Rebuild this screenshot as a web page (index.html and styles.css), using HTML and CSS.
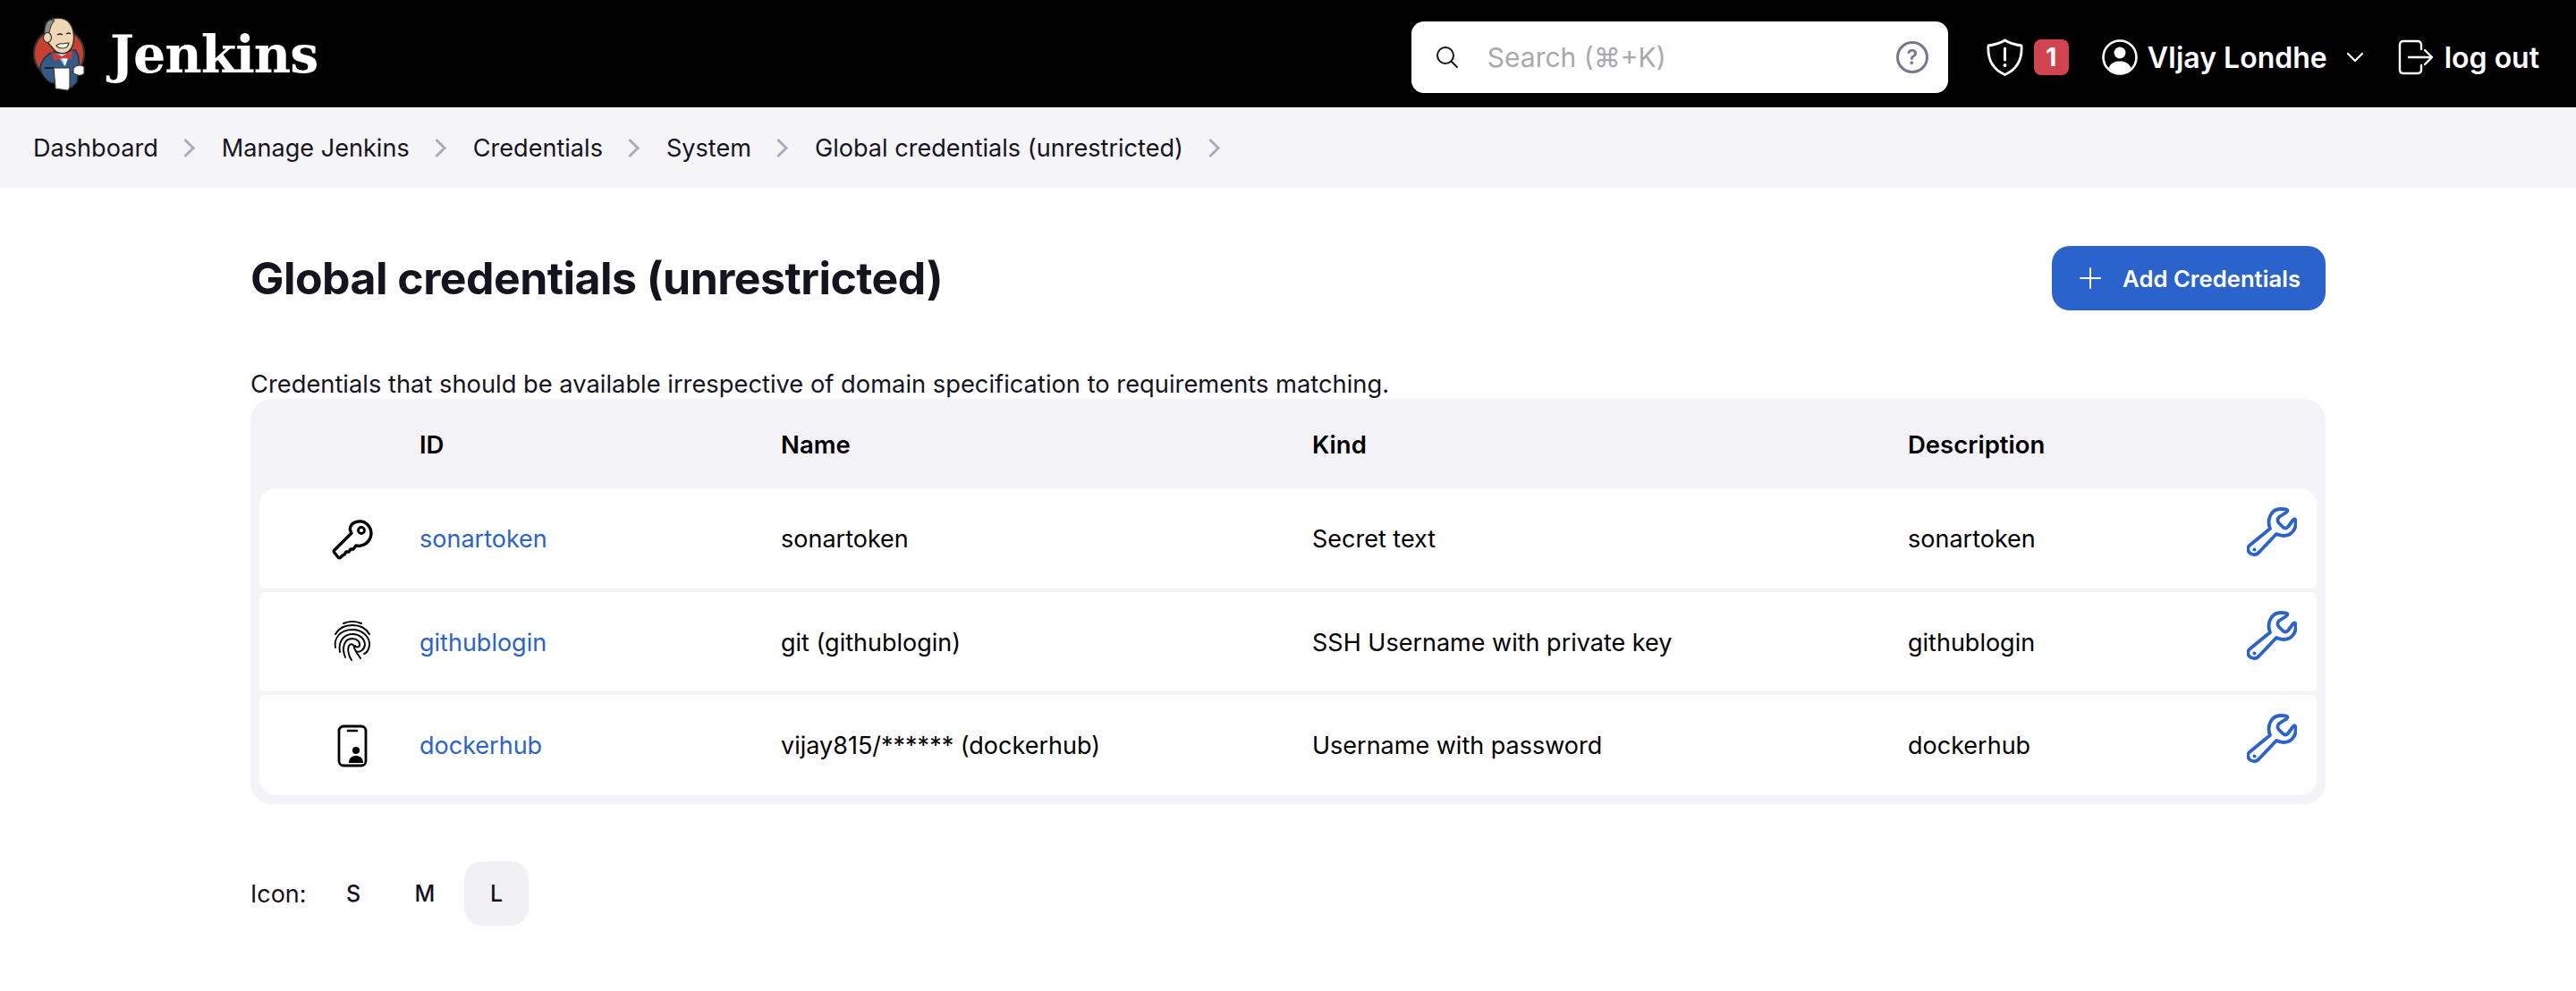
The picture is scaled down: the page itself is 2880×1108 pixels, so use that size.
FILE: index.html
```html
<!DOCTYPE html>
<html lang="en">
<head>
<meta charset="utf-8">
<title>Global credentials (unrestricted) [Jenkins]</title>
<link rel="stylesheet" href="styles.css">
</head>
<body>
<header class="page-header">
	<a class="brand" href="#">
		<svg class="brand-logo" viewBox="0 0 62 84" aria-hidden="true">
			<circle cx="30" cy="42" r="28" fill="#c8412f" stroke="#3a3534" stroke-width="2"/>
			<path d="M9 58 C10 48 18 42 24 40 L48 38 C52 42 53 50 52 60 L50 74 L44 80 L20 74 C14 70 10 64 9 58 Z" fill="#335b85" stroke="#23303f" stroke-width="1.5"/>
			<path d="M27 42 L36 56 L44 41 Z" fill="#8fb8d8"/>
			<path d="M31 42 L37 56 L41 42 Z" fill="#fff"/>
			<path d="M15 8 C20 1 36 0 42 8 C48 16 48 30 43 37 C38 44 28 43 23 36 C20 32 17 30 15 26 Z" fill="#f0d6b5" stroke="#2f2b2a" stroke-width="1.5"/>
			<path d="M21 4 C15 6 13 14 14 22 L18 25 C19 18 20 10 25 5 Z" fill="#8c8c8c" stroke="#2f2b2a" stroke-width="1"/>
			<ellipse cx="17" cy="24" rx="4.5" ry="5.5" fill="#f0d6b5" stroke="#2f2b2a" stroke-width="1.2"/>
			<path d="M28 21 q3 -2 6 0 M38 20 q3 -2 5 0" fill="none" stroke="#2f2b2a" stroke-width="1.3"/>
			<path d="M27 33 q4 -3 7 -2 q4 -1 7 -1 q-1 6 -7 6 q-5 0 -7 -3 Z" fill="#fff" stroke="#2f2b2a" stroke-width="1.2"/>
			<path d="M22 40 L33 45 L45 38 L44 48 L34 47 L24 50 Z" fill="#d33833"/>
			<path d="M14 58 H24" stroke="#111" stroke-width="1.5"/>
			<path d="M24 58 H42 V80 L40 83 L26 81 Z" fill="#fff" stroke="#3a3534" stroke-width="1.2"/>
			<path d="M46 58 C50 54 56 54 58 57 V64 C56 67 50 67 46 64 Z" fill="#fff" stroke="#3a3534" stroke-width="1.2"/>
		</svg>
		<span class="brand-name">Jenkins</span>
	</a>
	<div class="header-tools">
		<div class="search-box">
			<svg class="search-icon" viewBox="0 0 28 28" aria-hidden="true">
				<circle cx="12" cy="12" r="9" fill="none" stroke="#14141f" stroke-width="2"/>
				<path d="M18.5 18.5 L25 25" stroke="#14141f" stroke-width="2" stroke-linecap="round"/>
			</svg>
			<span class="search-placeholder">Search (⌘+K)</span>
			<span class="search-help">?</span>
		</div>
		<svg class="shield-icon" viewBox="0 0 41 42" aria-hidden="true">
			<path d="M20.5 2 C26 5.5 32 7 39 8 C40 22 35 34 20.5 40.5 C6 34 1 22 2 8 C9 7 15 5.5 20.5 2 Z" fill="none" stroke="#fff" stroke-width="2.8" stroke-linejoin="round"/>
			<path d="M20.5 11 V24" stroke="#fff" stroke-width="3" stroke-linecap="round"/>
			<circle cx="20.5" cy="30" r="2" fill="#fff"/>
		</svg>
		<span class="alert-count">1</span>
		<a class="user-link" href="#">
			<svg class="user-icon" viewBox="0 0 40 40" aria-hidden="true">
				<circle cx="20" cy="20" r="18.5" fill="none" stroke="#fff" stroke-width="2.6"/>
				<circle cx="20" cy="15" r="6.5" fill="#fff"/>
				<path d="M7.5 32 C10 26 15 24.5 20 24.5 C25 24.5 30 26 32.5 32 C29 36 24 38 20 38 C16 38 11 36 7.5 32 Z" fill="#fff"/>
			</svg>
			<span>VIjay Londhe</span>
			<svg class="user-caret" viewBox="0 0 20 12" aria-hidden="true">
				<path d="M2 2 L10 10 L18 2" fill="none" stroke="#fff" stroke-width="2.2" stroke-linecap="round" stroke-linejoin="round"/>
			</svg>
		</a>
		<a class="logout-link" href="#">
			<svg class="logout-icon" viewBox="0 0 40 40" aria-hidden="true">
				<path d="M26 11 V6 C26 3.5 24.5 2 22 2 H6 C3.5 2 2 3.5 2 6 V34 C2 36.5 3.5 38 6 38 H22 C24.5 38 26 36.5 26 34 V29" fill="none" stroke="#fff" stroke-width="2.4" stroke-linecap="round"/>
				<path d="M12 20 H38 M30 12 L38 20 L30 28" fill="none" stroke="#fff" stroke-width="2.4" stroke-linecap="round" stroke-linejoin="round"/>
			</svg>
			<span>log out</span>
		</a>
	</div>
</header>

<nav class="breadcrumbs">
	<a href="#">Dashboard</a><i class="crumb-sep"></i>
	<a href="#">Manage Jenkins</a><i class="crumb-sep"></i>
	<a href="#">Credentials</a><i class="crumb-sep"></i>
	<a href="#">System</a><i class="crumb-sep"></i>
	<a href="#">Global credentials (unrestricted)</a><i class="crumb-sep"></i>
</nav>

<main class="content">
	<div class="title-row">
		<h1>Global credentials (unrestricted)</h1>
		<a class="add-button" href="#">
			<svg class="add-icon" viewBox="0 0 24 24" aria-hidden="true">
				<path d="M12 1 V23 M1 12 H23" stroke="#fff" stroke-width="2" stroke-linecap="round"/>
			</svg>
			Add Credentials
		</a>
	</div>
	<p class="intro">Credentials that should be available irrespective of domain specification to requirements matching.</p>

	<div class="cred-panel">
		<table class="cred-table">
			<colgroup>
				<col class="col-icon"><col class="col-id"><col class="col-name"><col class="col-kind"><col class="col-desc"><col>
			</colgroup>
			<thead>
				<tr><th></th><th>ID</th><th>Name</th><th>Kind</th><th>Description</th><th></th></tr>
			</thead>
			<tbody>
				<tr>
					<td class="type-cell">
						<svg class="type-icon" viewBox="0 0 48 48" aria-hidden="true">
							<path d="M23 17 L4 36 C3 37 3 38 4 39 L8 44 C9 45 10 45 11 44 L13 42 L15 41 L17 38 L20 38 L22 35 L25 35 L28 31 C36 33 44 27 45 18 C45 10 39 3 31 4 C23 5 19 11 23 17 Z" fill="none" stroke="#000" stroke-width="3.4" stroke-linejoin="round"/>
							<circle cx="34" cy="14" r="3.5" fill="none" stroke="#000" stroke-width="2.8"/>
						</svg>
					</td>
					<td><a class="cred-link" href="#">sonartoken</a></td>
					<td>sonartoken</td>
					<td>Secret text</td>
					<td>sonartoken</td>
					<td class="action-cell"><svg class="wrench" viewBox="0 0 56 56" aria-hidden="true"><use href="#wrench-shape"/></svg></td>
				</tr>
				<tr>
					<td class="type-cell">
						<svg class="type-icon" viewBox="0 0 48 48" aria-hidden="true">
							<g fill="none" stroke="#000" stroke-width="1.9" stroke-linecap="round">
								<path d="M14 3 C20 0.5 28 0.5 34 3"/>
								<path d="M5 15 C9 8 16 5 24 5 C32 5 39 8 43 15"/>
								<path d="M5 30 C3 20 10 10 24 10 C36 10 44 19 43 28 C42 33 40 36 37 37"/>
								<path d="M10 35 C8 25 13 15 24 15 C33 15 38 21 38 27 C37 33 32 36 28 34"/>
								<path d="M16 41 C12 31 14 20 24 20 C29 20 33 24 32 28 C31 30 28 30 27 28"/>
								<path d="M23 44 C19 38 18 30 21 27 C23 25 26 27 26 30 C27 34 30 37 33 42"/>
							</g>
						</svg>
					</td>
					<td><a class="cred-link" href="#">githublogin</a></td>
					<td>git (githublogin)</td>
					<td>SSH Username with private key</td>
					<td>githublogin</td>
					<td class="action-cell"><svg class="wrench" viewBox="0 0 56 56" aria-hidden="true"><use href="#wrench-shape"/></svg></td>
				</tr>
				<tr>
					<td class="type-cell">
						<svg class="type-icon" viewBox="0 0 48 48" aria-hidden="true">
							<rect x="9" y="2" width="30" height="44" rx="5" fill="none" stroke="#000" stroke-width="2.8"/>
							<path d="M19 7 H29" stroke="#000" stroke-width="2.6" stroke-linecap="round"/>
							<circle cx="28" cy="29" r="4" fill="#000"/>
							<path d="M20 43 C20 37 24 35 28 35 C32 35 36 37 36 43 Z" fill="#000"/>
						</svg>
					</td>
					<td><a class="cred-link" href="#">dockerhub</a></td>
					<td>vijay815/****** (dockerhub)</td>
					<td>Username with password</td>
					<td>dockerhub</td>
					<td class="action-cell"><svg class="wrench" viewBox="0 0 56 56" aria-hidden="true"><use href="#wrench-shape"/></svg></td>
				</tr>
			</tbody>
		</table>
	</div>

	<div class="icon-sizes">
		<span class="icon-label">Icon:</span>
		<a class="size-option" href="#">S</a>
		<a class="size-option" href="#">M</a>
		<a class="size-option size-active" href="#">L</a>
	</div>
</main>

<svg class="svg-defs" aria-hidden="true">
	<symbol id="wrench-shape" viewBox="0 0 56 56">
		<path d="M26 24 C22 14 27 2 38 2 C41 2 44 2 45 3 C46 4 45 5 44 6 L36 11 C34 13 34 16 36 18 L40 22 C42 24 44 24 46 22 L52 14 C53 13 54 13 54.5 15 C56 24 50 32 41 32 C38 32 36 31 33 30 L14 50 C11 54 6 54 3 51 C0 48 1 44 4 42 Z" fill="none" stroke="#2b63cc" stroke-width="3.8" stroke-linejoin="round"/>
		<circle cx="8.5" cy="47.5" r="2" fill="#2b63cc"/>
	</symbol>
</svg>
</body>
</html>
```

FILE: styles.css
```css
* {
	box-sizing: border-box;
}
body {
	margin: 0;
	background: #fff;
	color: #14141f;
	font-family: Inter, "Liberation Sans", sans-serif;
	font-size: 27px;
}
a {
	color: inherit;
	text-decoration: none;
}

/* top bar */
.page-header {
	display: flex;
	align-items: center;
	justify-content: space-between;
	height: 120px;
	padding: 0 41px 0 36px;
	background: #000;
	color: #fff;
}
.brand {
	display: flex;
	align-items: center;
	gap: 25px;
}
.brand-logo {
	width: 62px;
	height: 84px;
}
.brand-name {
	font-family: "DejaVu Serif", "Liberation Serif", serif;
	font-size: 57px;
	font-weight: 700;
	letter-spacing: -1px;
}
.header-tools {
	display: flex;
	align-items: center;
	font-size: 30px;
	font-weight: 600;
}
.search-box {
	display: flex;
	align-items: center;
	width: 600px;
	height: 80px;
	margin-top: 8px;
	padding: 0 22px 0 26px;
	background: #fff;
	border-radius: 14px;
}
.search-icon {
	width: 28px;
	height: 28px;
}
.search-placeholder {
	flex: 1;
	margin-left: 31px;
	color: #a9a9ae;
	font-weight: 400;
}
.search-help {
	width: 36px;
	height: 36px;
	border: 3px solid #777790;
	border-radius: 50%;
	color: #777790;
	font-size: 23px;
	font-weight: 600;
	line-height: 30px;
	text-align: center;
}
.shield-icon {
	width: 41px;
	height: 42px;
	margin-left: 43px;
	margin-top: 8px;
}
.alert-count {
	width: 39px;
	height: 40px;
	margin-left: 12px;
	margin-top: 8px;
	background: #d0444f;
	border-radius: 8px;
	font-size: 28px;
	font-weight: 700;
	line-height: 40px;
	text-align: center;
}
.user-link {
	display: flex;
	align-items: center;
	margin-left: 37px;
	margin-top: 8px;
	font-size: 32px;
}
.user-icon {
	width: 40px;
	height: 40px;
	margin-right: 11px;
}
.user-caret {
	width: 20px;
	height: 12px;
	margin-left: 21px;
}
.logout-link {
	display: flex;
	align-items: center;
	gap: 12px;
	margin-left: 38px;
	margin-top: 8px;
	font-size: 32px;
}
.logout-icon {
	width: 40px;
	height: 40px;
}

/* breadcrumb */
.breadcrumbs {
	display: flex;
	align-items: center;
	height: 90px;
	padding-left: 37px;
	background: #f5f5f8;
	font-size: 27.1px;
}
.crumb-sep {
	width: 15px;
	height: 15px;
	margin: 0 33px 0 23px;
	border-top: 3px solid #ababbd;
	border-right: 3px solid #ababbd;
	transform: rotate(45deg);
}

/* page body */
.content {
	padding: 65px 280px 0;
}
.title-row {
	display: flex;
	align-items: center;
	justify-content: space-between;
}
h1 {
	margin: 0;
	font-size: 50px;
	font-weight: 700;
	letter-spacing: -0.55px;
}
.add-button {
	display: flex;
	align-items: center;
	gap: 24px;
	height: 72px;
	padding: 0 28px 0 31px;
	background: #2b63cc;
	border-radius: 20px;
	color: #fff;
	font-size: 25.7px;
	font-weight: 600;
}
.add-icon {
	width: 24px;
	height: 24px;
}
.intro {
	margin: 66px 0 0;
	font-size: 27.3px;
	line-height: 33px;
}

/* credentials table */
.cred-panel {
	padding: 0 10px 6px;
	background: #f3f3f8;
	border-radius: 24px;
}
.cred-table {
	width: 100%;
	table-layout: fixed;
	border-collapse: separate;
	border-spacing: 0 4px;
}
.col-icon {
	width: 163px;
}
.col-id {
	width: 404px;
}
.col-name {
	width: 594px;
}
.col-kind {
	width: 666px;
}
.col-desc {
	width: 380px;
}
.cred-table th {
	height: 92px;
	padding: 2px 16px 0;
	color: #000;
	font-size: 27.5px;
	font-weight: 600;
	text-align: left;
}
.cred-table td {
	height: 111.5px;
	padding: 2px 16px 0;
	background: #fff;
	color: #000;
	font-weight: 410;
}
.cred-table td:first-child {
	border-radius: 6px 0 0 6px;
}
.cred-table td:last-child {
	border-radius: 0 6px 6px 0;
}
.cred-table tbody tr:first-child td:first-child {
	border-top-left-radius: 18px;
}
.cred-table tbody tr:first-child td:last-child {
	border-top-right-radius: 18px;
}
.cred-table tbody tr:last-child td:first-child {
	border-bottom-left-radius: 18px;
}
.cred-table tbody tr:last-child td:last-child {
	border-bottom-right-radius: 18px;
}
.cred-link {
	color: #2b63cc;
}
.cred-table .type-cell {
	padding: 2px 35px 0 0;
	text-align: right;
}
.type-icon {
	display: inline-block;
	width: 48px;
	height: 48px;
	vertical-align: middle;
}
.cred-table .action-cell {
	padding: 21px 0 0 15px;
	vertical-align: top;
}
.wrench {
	display: block;
	width: 56px;
	height: 56px;
}
.svg-defs {
	display: none;
}

/* icon size switch */
.icon-sizes {
	display: flex;
	align-items: center;
	margin-top: 64px;
}
.icon-label {
	width: 79px;
	padding-top: 2px;
}
.size-option {
	width: 72px;
	height: 72px;
	margin-right: 8px;
	border-radius: 20px;
	font-size: 25px;
	font-weight: 500;
	line-height: 72px;
	text-align: center;
}
.size-active {
	background: #f1f1f5;
}
```
